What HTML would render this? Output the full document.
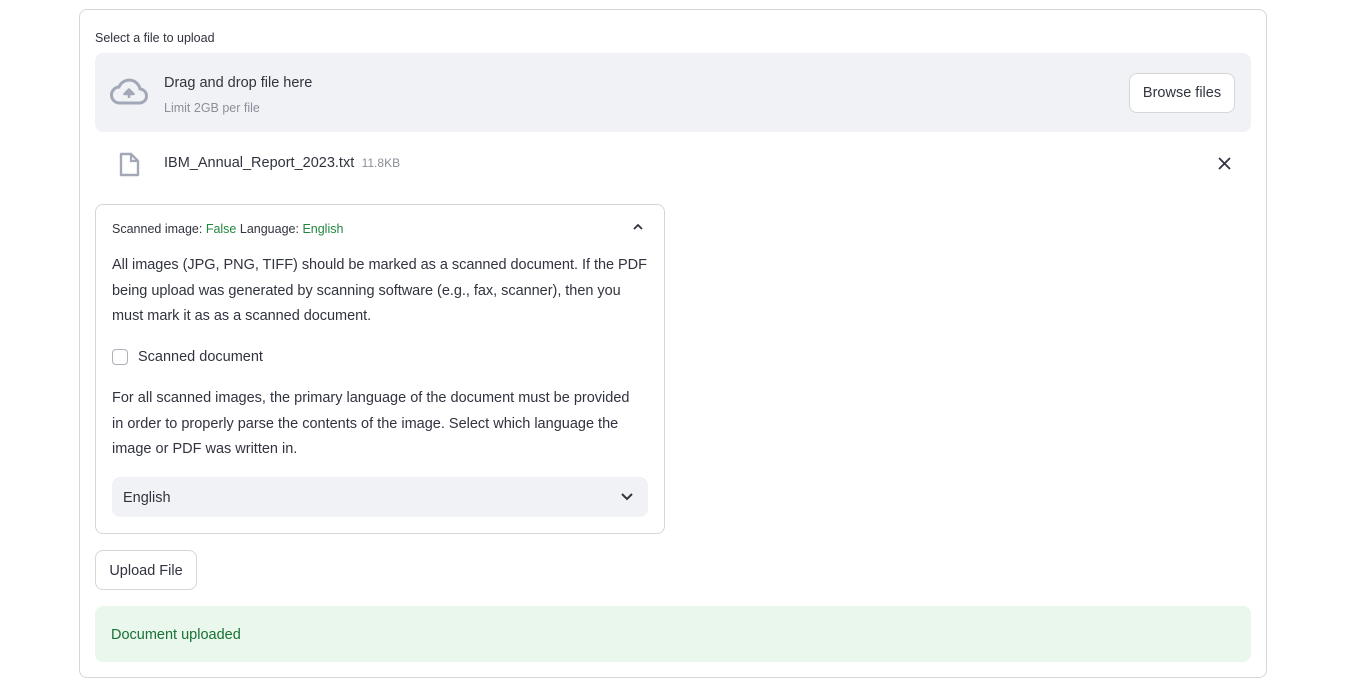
<!DOCTYPE html>
<html><head><meta charset="utf-8"><style>
*{box-sizing:border-box;margin:0;padding:0}
body{width:1345px;height:688px;background:#fff;font-family:"Liberation Sans",sans-serif;color:#31333f;position:relative;overflow:hidden}
.a{position:absolute;white-space:nowrap}
.outer{position:absolute;left:79px;top:9px;width:1188px;height:669px;border:1px solid #d6d6d9;border-radius:8px}
.t15{font-size:14.5px}
</style></head><body>
<div class="outer"></div>
<div class="a" style="left:95px;top:31px;font-size:12.5px">Select a file to upload</div>
<div class="a" style="left:95px;top:53px;width:1156px;height:79px;background:#f0f2f6;border-radius:8px"></div>
<svg class="a" style="left:110px;top:78px" width="38" height="28" viewBox="0 0 38 28"><path d="M10 25 H29 A7 7 0 0 0 30 11 A11 11 0 0 0 9 9 A8 8 0 0 0 10 25 Z" fill="none" stroke="#a3a8b8" stroke-width="3"/><path d="M19 20 V13 M14.5 16 L19 11.5 L23.5 16 Z" fill="#a3a8b8" stroke="#a3a8b8" stroke-width="2.5" stroke-linejoin="round"/></svg>
<div class="a" style="left:164px;top:75px;font-size:14.5px">Drag and drop file here</div>
<div class="a" style="left:164px;top:101px;font-size:12.5px;color:#8c8f99">Limit 2GB per file</div>
<div class="a" style="left:1129px;top:73px;width:106px;height:40px;background:#fff;border:1px solid #d6d6d9;border-radius:8px;font-size:14.5px;text-align:center;line-height:39px">Browse files</div>
<svg class="a" style="left:119px;top:152px" width="22" height="25" viewBox="0 0 22 25"><path d="M2 2 H12 L19 9 V23 H2 Z" fill="none" stroke="#a3a8b8" stroke-width="2.4" stroke-linejoin="round"/><path d="M12 2 V9 H19" fill="none" stroke="#a3a8b8" stroke-width="2.2"/></svg>
<div class="a" style="left:164px;top:155px;font-size:14.5px">IBM_Annual_Report_2023.txt <span style="font-size:12px;color:#8c8f99">&nbsp;11.8KB</span></div>
<svg class="a" style="left:1218px;top:157px" width="13" height="13" viewBox="0 0 13 13"><path d="M1 1 L12 12 M12 1 L1 12" stroke="#31333f" stroke-width="1.8"/></svg>
<div class="a" style="left:95px;top:204px;width:570px;height:330px;border:1px solid #d6d6d9;border-radius:8px"></div>
<div class="a" style="left:112px;top:222px;font-size:12.5px">Scanned image: <span style="color:#21873d">False</span> Language: <span style="color:#21873d">English</span></div>
<svg class="a" style="left:632px;top:222px" width="12" height="10" viewBox="0 0 12 10"><path d="M2 7 L6 3 L10 7" fill="none" stroke="#31333f" stroke-width="1.8"/></svg>
<div class="a t15" style="left:112px;top:253px;line-height:25.5px;letter-spacing:-0.03px">All images (JPG, PNG, TIFF) should be marked as a scanned document. If the PDF<br>being upload was generated by scanning software (e.g., fax, scanner), then you<br>must mark it as as a scanned document.</div>
<div class="a" style="left:112px;top:349px;width:16px;height:16px;border:1px solid #aeb0b8;border-radius:4px"></div>
<div class="a t15" style="left:138px;top:349px">Scanned document</div>
<div class="a t15" style="left:112px;top:386px;line-height:25.5px">For all scanned images, the primary language of the document must be provided<br>in order to properly parse the contents of the image. Select which language the<br>image or PDF was written in.</div>
<div class="a" style="left:112px;top:477px;width:536px;height:40px;background:#f0f2f6;border-radius:8px"></div>
<div class="a t15" style="left:123px;top:490px">English</div>
<svg class="a" style="left:620px;top:492px" width="14" height="10" viewBox="0 0 14 10"><path d="M2 2 L7 7 L12 2" fill="none" stroke="#31333f" stroke-width="2"/></svg>
<div class="a" style="left:95px;top:550px;width:102px;height:40px;border:1px solid #d6d6d9;border-radius:8px;font-size:14.5px;text-align:center;line-height:40px">Upload File</div>
<div class="a" style="left:95px;top:606px;width:1156px;height:56px;background:#eaf7ec;border-radius:8px"></div>
<div class="a t15" style="left:111px;top:627px;color:#177233">Document uploaded</div>
</body></html>
